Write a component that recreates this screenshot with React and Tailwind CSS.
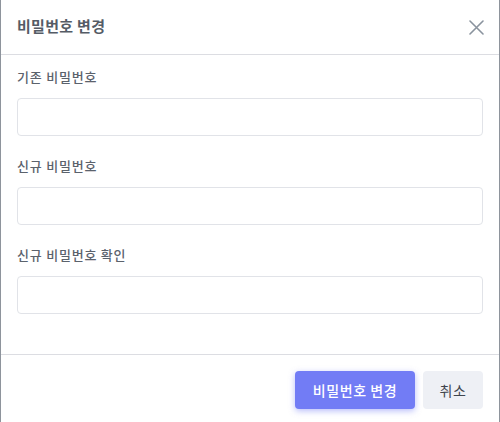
import React from 'react';

const font = { fontFamily: '"Noto Sans CJK KR", "Noto Sans", sans-serif' };

const Field = ({ label }) => (
  <div className="mb-5">
    <label className="block h-5 text-[13px] leading-5 font-medium tracking-[0.06em] text-[#5b626c] mb-[11px]">{label}</label>
    <input
      type="password"
      className="block w-full h-[38px] rounded border border-[#e1e3e8] bg-white px-3 text-sm outline-none"
    />
  </div>
);

export default function App() {
  return (
    <div className="w-[500px] h-[422px] bg-white border-x border-[#8e949c] flex flex-col overflow-hidden" style={font}>
      <div className="h-[55px] shrink-0 flex items-center justify-between px-4 border-b border-[#dcdde2]">
        <h2 className="text-[15px] font-bold tracking-[0.02em] text-[#555c66] pb-px">비밀번호 변경</h2>
        <button className="w-[15px] h-[15px] text-[#8a939e] mr-[-1px]">
          <svg viewBox="0 0 15 15" width="15" height="15" fill="none" stroke="currentColor" strokeWidth="1.6" strokeLinecap="round">
            <path d="M1 1L14 14M14 1L1 14" />
          </svg>
        </button>
      </div>

      <div className="px-4 pt-3 pb-5 border-b border-[#dcdde2]">
        <Field label="기존 비밀번호" />
        <Field label="신규 비밀번호" />
        <Field label="신규 비밀번호 확인" />
      </div>

      <div className="flex justify-end gap-2 px-4 pt-4">
        <button className="h-[38px] w-[120px] rounded bg-[#727cf5] text-white text-sm font-medium tracking-[0.04em] shadow-[0_2px_6px_rgba(114,124,245,0.5)]">
          비밀번호 변경
        </button>
        <button className="h-[38px] w-[60px] rounded bg-[#eef0f5] text-[#3f454d] text-sm tracking-[0.04em]">
          취소
        </button>
      </div>
    </div>
  );
}
